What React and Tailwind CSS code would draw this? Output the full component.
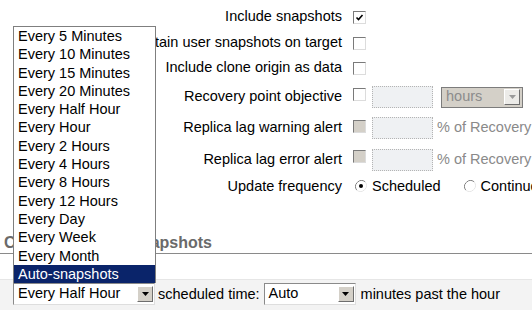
import React from 'react';

const frequencies = [
  'Every 5 Minutes',
  'Every 10 Minutes',
  'Every 15 Minutes',
  'Every 20 Minutes',
  'Every Half Hour',
  'Every Hour',
  'Every 2 Hours',
  'Every 4 Hours',
  'Every 8 Hours',
  'Every 12 Hours',
  'Every Day',
  'Every Week',
  'Every Month',
  'Auto-snapshots',
];

function CheckBox({ checked, disabled, className = '' }) {
  return (
    <div
      className={`w-[13px] h-[13px] shrink-0 flex items-center justify-center border border-t-[#7a7a7a] border-l-[#7a7a7a] border-b-[#dcdcdc] border-r-[#dcdcdc] ${
        disabled ? 'bg-[#d4d0c8]' : 'bg-white'
      } ${className}`}
    >
      {checked && (
        <svg width="9" height="9" viewBox="0 0 9 9">
          <path d="M1.5 4.5 L3.5 6.5 L7.5 2" fill="none" stroke="#000" strokeWidth="1.6" />
        </svg>
      )}
    </div>
  );
}

function Radio({ checked }) {
  return (
    <svg width="12" height="12" viewBox="0 0 12 12" className="shrink-0">
      <path d="M10.2 1.8 A6 6 0 0 0 1.8 10.2" fill="none" stroke="#808080" strokeWidth="1" />
      <path d="M1.8 10.2 A6 6 0 0 0 10.2 1.8" fill="none" stroke="#e6e6e6" strokeWidth="1" />
      <circle cx="6" cy="6" r="4.6" fill="#fff" />
      {checked && <circle cx="6" cy="6" r="2" fill="#000" />}
    </svg>
  );
}

function ArrowButton({ muted }) {
  return (
    <div
      className={`w-[16px] h-[16px] shrink-0 flex items-center justify-center border border-t-white border-l-white border-b-[#6e6e6e] border-r-[#6e6e6e] ${
        muted ? 'bg-[#ecebe8]' : 'bg-[#d4d0c8]'
      }`}
    >
      <svg width="7" height="4" viewBox="0 0 7 4">
        <path d="M0 0 H7 L3.5 4 Z" fill={muted ? '#9a9a9a' : '#000'} />
      </svg>
    </div>
  );
}

function TextBox() {
  return <div className="w-[61px] h-[22px] shrink-0 border border-dotted border-[#b4b4b4] bg-[#eff1f3]" />;
}

function Label({ children }) {
  return <div className="w-[342px] shrink-0 text-right">{children}</div>;
}

export default function App() {
  return (
    <div
      className="relative w-[532px] h-[311px] overflow-hidden bg-white text-[14.5px] text-black"
      style={{ fontFamily: '"Liberation Sans", Arial, sans-serif' }}
    >
      {/* Form rows */}
      <div className="flex flex-col pt-[5px] whitespace-nowrap">
        <div className="flex items-center h-[24px]">
          <Label>Include snapshots</Label>
          <CheckBox checked className="ml-[11px]" />
        </div>
        <div className="flex items-center h-[28px]">
          <Label>Retain user snapshots on target</Label>
          <CheckBox className="ml-[11px]" />
        </div>
        <div className="flex items-center h-[22px]">
          <Label>Include clone origin as data</Label>
          <CheckBox className="ml-[11px]" />
        </div>
        <div className="flex items-center h-[36px]">
          <Label>Recovery point objective</Label>
          <CheckBox className="ml-[11px] -mt-[6px]" />
          <div className="ml-[6px] shrink-0">
            <TextBox />
          </div>
          <div className="ml-[8px] w-[82px] h-[21px] shrink-0 flex items-center justify-between pl-[4px] pr-[2px] bg-[#d4d0c8] border border-[#7c7c7c] text-[#8c8c8c]">
            <span>hours</span>
            <ArrowButton muted />
          </div>
        </div>
        <div className="flex items-center h-[26px]">
          <Label>Replica lag warning alert</Label>
          <CheckBox disabled className="ml-[11px] -mt-[4px]" />
          <div className="ml-[6px] shrink-0">
            <TextBox />
          </div>
          <span className="ml-[4px] shrink-0 text-[#8a8a8a]">% of Recovery Point</span>
        </div>
        <div className="flex items-center h-[38px]">
          <Label>Replica lag error alert</Label>
          <CheckBox disabled className="ml-[11px] -mt-[8px]" />
          <div className="ml-[6px] shrink-0">
            <TextBox />
          </div>
          <span className="ml-[4px] shrink-0 text-[#8a8a8a]">% of Recovery Point</span>
        </div>
        <div className="flex items-center h-[16px]">
          <Label>Update frequency</Label>
          <div className="ml-[13px] -mt-[2px] shrink-0">
            <Radio checked />
          </div>
          <span className="ml-[5px] shrink-0">Scheduled</span>
          <div className="ml-[23px] -mt-[2px] shrink-0">
            <Radio />
          </div>
          <span className="ml-[5px] shrink-0">Continuous</span>
        </div>
      </div>

      {/* Section heading */}
      <div className="mt-[37px] h-[22px] flex items-center pl-[4px] border-b border-[#8a8a8a] text-[16px] font-bold text-[#6a6a6a] whitespace-nowrap">
        Configure Local Snapshots
      </div>

      {/* Schedule bar */}
      <div className="mt-[25px] h-[31px] bg-[#f3f3f3] border-t border-[#e6e6e6] pt-[3px] pl-[13px] flex items-start whitespace-nowrap">
        <div className="w-[142px] h-[22px] shrink-0 flex items-center justify-between pl-[4px] pr-[1px] bg-white border border-t-[#8a8a8a] border-l-[#8a8a8a] border-b-[#dedede] border-r-[#dedede]">
          <span>Every Half Hour</span>
          <ArrowButton />
        </div>
        <span className="ml-[3px] leading-[22px]">scheduled time:</span>
        <div className="ml-[4px] w-[92px] h-[22px] shrink-0 flex items-center justify-between pl-[4px] pr-[1px] bg-white border border-t-[#8a8a8a] border-l-[#8a8a8a] border-b-[#dedede] border-r-[#dedede]">
          <span>Auto</span>
          <ArrowButton />
        </div>
        <span className="ml-[5px] leading-[22px]">minutes past the hour</span>
      </div>

      {/* Open dropdown list */}
      <div className="absolute left-[13px] top-[26px] w-[143px] bg-white border border-b-0 border-[#7f7f7f] whitespace-nowrap">
        {frequencies.map((f) => (
          <div
            key={f}
            className={`h-[18.3px] leading-[18.3px] pl-[4px] ${
              f === 'Auto-snapshots' ? 'bg-[#0a246a] text-white' : ''
            }`}
          >
            {f}
          </div>
        ))}
      </div>
    </div>
  );
}
